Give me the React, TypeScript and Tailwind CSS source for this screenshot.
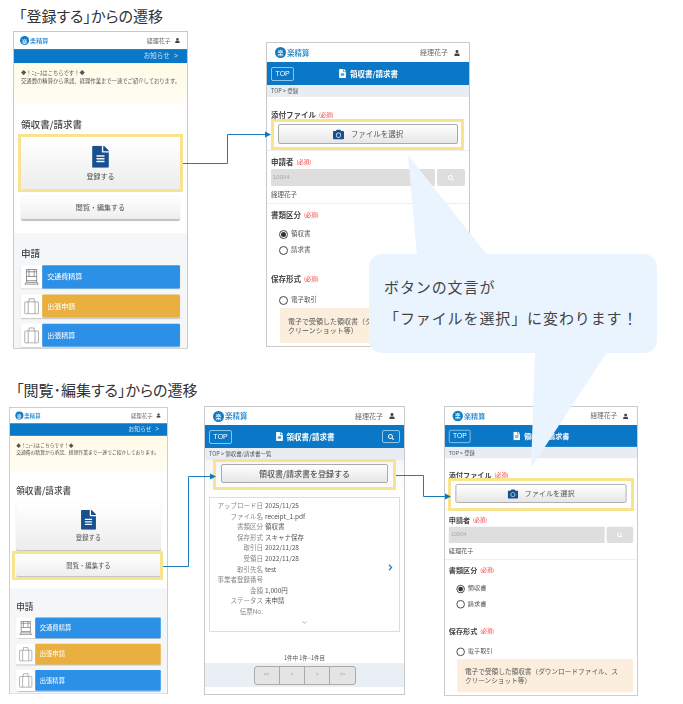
import type { ReactNode } from "react";
import { ChevronDown } from "lucide-react";
import { FaCamera, FaChevronRight, FaFileAlt, FaSearch, FaUser } from "react-icons/fa";

function Phone({
  x,
  y,
  width,
  height,
  base,
  children,
}: {
  x: number;
  y: number;
  width: number;
  height: number;
  base: number;
  children: ReactNode;
}) {
  const s = width / base;
  return (
    <div
      className="absolute overflow-hidden bg-white"
      style={{ left: x, top: y, width, height }}
    >
      <div
        className="flex origin-top-left flex-col overflow-hidden border border-[#c9c9c9] bg-white text-[#444] blur-[0.3px]"
        style={{ width: base, height: height / s, transform: `scale(${s})` }}
      >
        {children}
      </div>
    </div>
  );
}

function Header({ h, pad, big }: { h: string; pad: string; big?: boolean }) {
  return (
    <div className={`flex shrink-0 items-center justify-between ${h} ${pad}`}>
      <div className={`flex items-center font-medium text-[#1f86c9] ${big ? "text-[7.5px]" : "text-[6px]"}`}>
        <span
          className={`mr-px flex items-center justify-center rounded-full bg-[#0f7cc6] text-white ${
            big ? "size-[11px] text-[6px]" : "size-[9px] text-[5px]"
          }`}
        >
          楽
        </span>
        楽精算
      </div>
      <div className={`flex items-center text-[#666] ${big ? "gap-[6px] text-[7px]" : "gap-[4px] text-[6px]"}`}>
        経理花子
        <FaUser className={`text-[#444] ${big ? "size-[6px]" : "size-[5px]"}`} />
      </div>
    </div>
  );
}

function TitleBar({ search }: { search?: boolean }) {
  return (
    <>
      <div className="relative flex h-[23px] shrink-0 items-center justify-between bg-[#0a78c6] px-[4px]">
        <span className="rounded-[2px] border border-[#8cc4ea] px-[3.5px] py-[2px] font-['Liberation_Sans',sans-serif] text-[7px] leading-[8px] text-white">
          TOP
        </span>
        <div className="absolute inset-0 flex items-center justify-center gap-[3px] text-[7.5px] font-bold text-white">
          <FaFileAlt className="size-[9px]" />
          領収書/請求書
        </div>
        {search && (
          <span className="z-10 flex h-[13px] w-[18px] items-center justify-center rounded-[2px] border border-[#8cc4ea]">
            <FaSearch className="size-[6px] text-white" />
          </span>
        )}
      </div>
    </>
  );
}

function Crumb({ children }: { children: ReactNode }) {
  return (
    <div className="flex h-[12px] shrink-0 items-center bg-[#e8edf3] px-[4px] text-[5.5px] text-[#555]">
      {children}
    </div>
  );
}

function Train() {
  return (
    <svg viewBox="0 0 20 20" className="size-[17px]" fill="none" stroke="#777" strokeWidth="0.9">
      <rect x="4" y="1.5" width="12" height="13" />
      <path d="M4 4h12M4 9.5h12M7 1.5v8M13 1.5v8M2 18.5h16M4.5 14.5l-2 4M15.5 14.5l2 4M4 16.5h12" />
    </svg>
  );
}

function Suitcase() {
  return (
    <svg viewBox="0 0 20 20" className="size-[17px]" fill="none" stroke="#888" strokeWidth="0.8">
      <rect x="2" y="5" width="16" height="14" rx="1" />
      <path d="M7 5V1.5h6V5M6 5v14M14 5v14" />
    </svg>
  );
}

function MenuRow({ label, color, icon }: { label: string; color: string; icon: ReactNode }) {
  return (
    <div className="flex h-[23px] shadow-[0_1px_1px_rgba(0,0,0,0.2)]">
      <div className="flex w-[21px] items-center justify-center bg-white">{icon}</div>
      <div className={`flex flex-1 items-center rounded-[1px] pl-[5px] text-[7px] text-white ${color}`}>
        {label}
      </div>
    </div>
  );
}

function MenuScreen() {
  return (
    <>
      <Header h="h-[17px]" pad="pl-[6px] pr-[7px]" />
      <div className="flex h-[14px] shrink-0 items-center justify-end gap-[4px] bg-[#0a78c6] pr-[9px] text-[6.5px] text-[#cfe6f7]">
        お知らせ
        <span className="font-['Liberation_Sans',sans-serif] text-[7px]">&gt;</span>
      </div>
      <div className="h-[41px] shrink-0 bg-linear-to-b from-[#fffbe6] to-[#fffdf5] px-[7px] pt-[6px] text-[5.3px] leading-[8px] text-[#555]">
        <p>◆！ﾆｭｰｽはこちらです！◆</p>
        <p className="whitespace-nowrap">交通費の精算から承認、経理作業まで一連でご紹介しております。</p>
      </div>
      <div className="h-[128px] shrink-0 px-[7px] pt-[12px]">
        <h2 className="h-[14px] text-[9.5px] leading-[14px] font-medium text-[#444]">領収書/請求書</h2>
        <div className="mt-[7.5px] flex h-[51px] flex-col items-center justify-center gap-[3px] rounded-[2px] bg-linear-to-b from-white to-[#ececec] text-[7px] text-[#555] shadow-[0_1px_1px_rgba(0,0,0,0.25)]">
          <FaFileAlt className="h-[22px] w-[18px] text-[#17508f]" />
          登録する
        </div>
        <div className="mt-[7px] flex h-[22px] items-center justify-center rounded-[2px] bg-linear-to-b from-white to-[#eeeeee] text-[7px] text-[#555] shadow-[0_1px_1px_rgba(0,0,0,0.25)]">
          閲覧・編集する
        </div>
      </div>
      <div className="flex flex-1 flex-col bg-[#f4f6f8] px-[7px] pt-[13px]">
        <h2 className="mb-[5px] h-[14px] text-[9.5px] leading-[14px] font-medium text-[#444]">申請</h2>
        <div className="flex flex-col gap-[6px]">
          <MenuRow label="交通費精算" color="bg-[#2b90e6]" icon={<Train />} />
          <MenuRow label="出張申請" color="bg-[#e9b040]" icon={<Suitcase />} />
          <MenuRow label="出張精算" color="bg-[#2b90e6]" icon={<Suitcase />} />
        </div>
      </div>
    </>
  );
}

function FieldLabel({ children, className }: { children: ReactNode; className?: string }) {
  return (
    <div className={`flex h-[12px] items-center gap-[3px] text-[7.5px] font-bold text-[#444] ${className ?? ""}`}>
      {children}
      <span className="text-[5.5px] font-normal text-[#e33]">(必須)</span>
    </div>
  );
}

function Radio({ label, checked }: { label: string; checked?: boolean }) {
  return (
    <div className="flex h-[10px] items-center gap-[3px] pl-[8px] text-[6.5px] text-[#555]">
      <span className="flex size-[9px] items-center justify-center rounded-full border border-[#444] bg-white">
        {checked && <span className="size-[5px] rounded-full bg-[#333]" />}
      </span>
      {label}
    </div>
  );
}

function FormScreen() {
  return (
    <>
      <Header h="h-[19px]" pad="pl-[8px] pr-[9px]" big />
      <TitleBar />
      <Crumb>TOP &gt; 登録</Crumb>
      <div className="h-[54px] shrink-0 border-b border-[#eee] px-[4px] pt-[12px]">
        <FieldLabel>添付ファイル</FieldLabel>
        <div className="mx-[7px] mt-[3px] flex h-[20px] items-center justify-center gap-[7px] rounded-[2px] border border-[#aaa] bg-linear-to-b from-white to-[#e6e6e6] text-[7.5px] text-[#555]">
          <FaCamera className="size-[11px] text-[#17508f]" />
          ファイルを選択
        </div>
      </div>
      <div className="h-[53px] shrink-0 border-b border-[#eee] px-[4px] pt-[5px]">
        <FieldLabel>申請者</FieldLabel>
        <div className="mt-[1px] flex h-[17px] gap-[2px]">
          <div className="flex flex-1 items-center rounded-[1px] bg-[#dedede] pl-[2px] font-['Liberation_Sans',sans-serif] text-[6px] text-[#aaa]">
            10004
          </div>
          <div className="flex w-[28px] items-center justify-center rounded-[2px] bg-[#dedede]">
            <FaSearch className="size-[6px] text-white" />
          </div>
        </div>
        <div className="mt-[3px] text-[6.5px] leading-[10px] text-[#555]">経理花子</div>
      </div>
      <div className="shrink-0 px-[4px] pt-[5px]">
        <FieldLabel>書類区分</FieldLabel>
        <div className="mt-[8px] flex flex-col gap-[6px]">
          <Radio label="領収書" checked />
          <Radio label="請求書" />
        </div>
        <FieldLabel className="mt-[18px]">保存形式</FieldLabel>
        <div className="mt-[10px]">
          <Radio label="電子取引" />
        </div>
        <div className="mt-[3px] ml-[9px] h-[35px] rounded-[1px] bg-[#fbeedd] pt-[9px] pr-[12px] pl-[8px] text-[7px] leading-[9px] text-[#555]">
          電子で受領した領収書（ダウンロードファイル、スクリーンショット等）
        </div>
      </div>
    </>
  );
}

const receipt = [
  ["アップロード日", "2025/11/25"],
  ["ファイル名", "receipt_1.pdf"],
  ["書類区分", "領収書"],
  ["保存形式", "スキャナ保存"],
  ["取引日", "2022/11/28"],
  ["受領日", "2022/11/28"],
  ["取引先名", "test"],
  ["事業者登録番号", ""],
  ["金額", "1,000円"],
  ["ステータス", "未申請"],
  ["伝票No.", ""],
];

function ListScreen() {
  return (
    <>
      <Header h="h-[18px]" pad="pl-[8px] pr-[9px]" big />
      <TitleBar search />
      <Crumb>TOP &gt; 領収書/請求書一覧</Crumb>
      <div className="h-[36px] shrink-0 bg-linear-to-b from-[#f4f6f8] to-white px-[16px] pt-[4px]">
        <div className="flex h-[19px] items-center justify-center rounded-[2px] border border-[#aaa] bg-linear-to-b from-white to-[#e6e6e6] text-[8px] font-medium text-[#555]">
          領収書/請求書を登録する
        </div>
      </div>
      <div className="mx-[4px] mt-[1px] flex h-[135px] shrink-0 flex-col border border-[#ddd] bg-white pt-[2px] text-[6.5px] leading-[10.6px]">
        <div className="flex flex-1 items-start">
          <div className="flex-1">
            {receipt.map(([label, value]) => (
              <div key={label} className="flex h-[10.6px]">
                <span className="w-[53px] text-right whitespace-nowrap text-[#888]">{label}</span>
                <span className="ml-[2px] text-[#555]">{value}</span>
              </div>
            ))}
          </div>
          <FaChevronRight className="mt-[64px] mr-[5px] size-[7px] text-[#0a78c6]" />
        </div>
        <div className="flex justify-center pb-[5px]">
          <ChevronDown className="size-[7px] text-[#777]" />
        </div>
      </div>
      <div className="mt-[22px] text-center text-[5.5px] leading-[8px] text-[#555]">1件中 1件~1件目</div>
      <div className="mt-[1px] flex h-[24px] shrink-0 items-center justify-center bg-[#e9eff5]">
        <div className="flex h-[19px] w-[102px] rounded-[3px] border border-[#aaa] bg-[#e4e4e4] font-['Liberation_Sans',sans-serif] text-[5px] text-[#999]">
          {["<<", "<", ">", ">>"].map((p, i) => (
            <span key={p} className={`flex flex-1 items-center justify-center ${i > 0 ? "border-l border-[#aaa]" : ""}`}>
              {p}
            </span>
          ))}
        </div>
      </div>
    </>
  );
}

const highlights = [
  "left-[18px] top-[134px] h-[58px] w-[165px]",
  "left-[271px] top-[119px] h-[31px] w-[193px]",
  "left-[12px] top-[551px] h-[29px] w-[151px]",
  "left-[213px] top-[459px] h-[31px] w-[183px]",
  "left-[448px] top-[478px] h-[33px] w-[186px]",
];

export default function App() {
  return (
    <div className="relative h-[704px] w-[683px] overflow-hidden bg-white font-['Noto_Sans_CJK_JP',sans-serif]">
      <h1 className="absolute top-[5px] left-[19px] text-[15px] leading-[22px] font-normal text-[#333] [font-feature-settings:'palt']">
        「登録する」からの遷移
      </h1>
      <h1 className="absolute top-[379px] left-[16px] text-[15px] leading-[22px] font-normal text-[#333] [font-feature-settings:'palt']">
        「閲覧･編集する」からの遷移
      </h1>

      <Phone x={13} y={31} width={175} height={318} base={174}>
        <MenuScreen />
      </Phone>
      <Phone x={266} y={42} width={204} height={305} base={204}>
        <FormScreen />
      </Phone>
      <Phone x={9} y={407} width={159} height={287} base={176}>
        <MenuScreen />
      </Phone>
      <Phone x={204} y={406} width={201} height={289} base={201}>
        <ListScreen />
      </Phone>
      <Phone x={444} y={406} width={194} height={290} base={204}>
        <FormScreen />
      </Phone>

      {highlights.map((c) => (
        <div key={c} className={`absolute border-[3px] border-[#f8e391] ${c}`} />
      ))}

      <svg className="absolute inset-0" width="683" height="704" viewBox="0 0 683 704">
        <g fill="none" stroke="#1a7db8" strokeWidth="1">
          <path d="M183 163.5H227.5V134.5H266" />
          <path d="M163 566.5H188.5V476.5H211" />
          <path d="M396 475.5H423.5V496.5H446" />
        </g>
        <g fill="#0f78bd">
          <path d="M271 134.5l-6-3v6z" />
          <path d="M216 476.5l-6-3v6z" />
          <path d="M451 496.5l-6-3v6z" />
        </g>
        <path d="M417 255L408 155L487 255z" fill="#e9f4fe" />
        <path d="M535 352L531 468L607 352z" fill="#e9f4fe" />
      </svg>

      <div className="absolute top-[254px] left-[369px] flex h-[99px] w-[288px] flex-col gap-[9px] rounded-[13px] bg-[#e9f4fe] pt-[22px] pl-[15px] text-[15px] leading-[22px] tracking-[0.9px] whitespace-nowrap text-[#444]">
        <p>ボタンの文言が</p>
        <p>「ファイルを選択」に変わります！</p>
      </div>
    </div>
  );
}
